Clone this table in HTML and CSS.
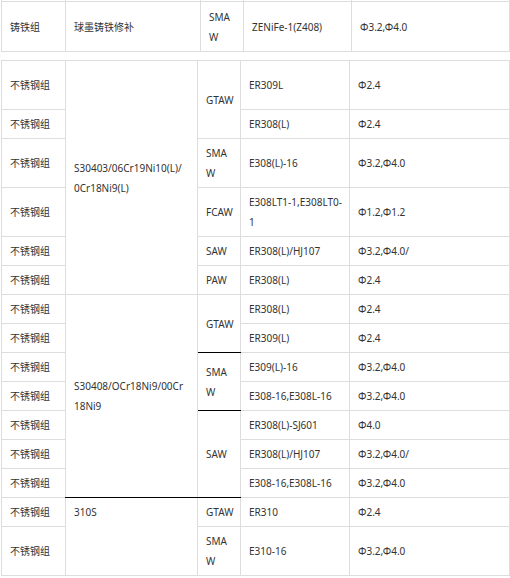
FILE: index.html
```html
<!DOCTYPE html>
<html lang="zh-CN">
<head>
<meta charset="utf-8">
<link rel="stylesheet" href="styles.css">
</head>
<body>
<div class="page">
<table class="tbl t1">
<colgroup><col class="a1"><col class="a2"><col class="a3"><col class="a4"><col class="a5"></colgroup>
<tr class="stub"><td></td><td></td><td></td><td></td><td></td></tr>
<tr><td>铸铁组</td><td>球墨铸铁修补</td><td>SMA<br>W</td><td>ZENiFe-1(Z408)</td><td>Φ3.2,Φ4.0</td></tr>
</table>

<table class="tbl t2">
<colgroup><col class="b1"><col class="b2"><col class="b3"><col class="b4"><col class="b5"></colgroup>
<tr class="tall"><td>不锈钢组</td><td rowspan="6">S30403/06Cr19Ni10(L)/<br>0Cr18Ni9(L)</td><td rowspan="2">GTAW</td><td>ER309L</td><td>Φ2.4</td></tr>
<tr><td>不锈钢组</td><td>ER308(L)</td><td>Φ2.4</td></tr>
<tr><td>不锈钢组</td><td>SMA<br>W</td><td>E308(L)-16</td><td>Φ3.2,Φ4.0</td></tr>
<tr><td>不锈钢组</td><td>FCAW</td><td>E308LT1-1,E308LT0-<br>1</td><td>Φ1.2,Φ1.2</td></tr>
<tr><td>不锈钢组</td><td>SAW</td><td>ER308(L)/HJ107</td><td>Φ3.2,Φ4.0/</td></tr>
<tr><td>不锈钢组</td><td>PAW</td><td>ER308(L)</td><td>Φ2.4</td></tr>
<tr><td>不锈钢组</td><td rowspan="7" class="bb">S30408/OCr18Ni9/00Cr<br>18Ni9</td><td rowspan="2" class="bb">GTAW</td><td>ER308(L)</td><td>Φ2.4</td></tr>
<tr><td>不锈钢组</td><td>ER309(L)</td><td>Φ2.4</td></tr>
<tr><td>不锈钢组</td><td rowspan="2" class="bt bb">SMA<br>W</td><td>E309(L)-16</td><td>Φ3.2,Φ4.0</td></tr>
<tr><td>不锈钢组</td><td>E308-16,E308L-16</td><td>Φ3.2,Φ4.0</td></tr>
<tr><td>不锈钢组</td><td rowspan="3" class="bt bb">SAW</td><td>ER308(L)-SJ601</td><td>Φ4.0</td></tr>
<tr><td>不锈钢组</td><td>ER308(L)/HJ107</td><td>Φ3.2,Φ4.0/</td></tr>
<tr><td>不锈钢组</td><td>E308-16,E308L-16</td><td>Φ3.2,Φ4.0</td></tr>
<tr><td>不锈钢组</td><td rowspan="2" class="bt top">310S</td><td class="bt">GTAW</td><td>ER310</td><td>Φ2.4</td></tr>
<tr><td>不锈钢组</td><td>SMA<br>W</td><td>E310-16</td><td>Φ3.2,Φ4.0</td></tr>
</table>
</div>
</body>
</html>
```
FILE: styles.css
```css
html, body {
  margin: 0;
  padding: 0;
  background: #ffffff;
}
.page {
  padding: 0 1px 0 1px;
  width: 508px;
}
.tbl {
  border-collapse: collapse;
  table-layout: fixed;
  width: 508px;
  font-family: "Noto Sans", "Noto Sans CJK SC", sans-serif;
  font-size: 10px;
  line-height: 20px;
  color: #333333;
}
.tbl td {
  border: 1px solid #dddddd;
  padding: 4px 8px;
  vertical-align: middle;
  text-align: left;
  white-space: nowrap;
  overflow: hidden;
}
.t1 .stub td {
  border-top: none;
  padding: 0;
  height: 1px;
  line-height: 1px;
}
.t1 td { padding-top: 5px; padding-bottom: 4px; }
.t2 { margin-top: 8px; }
.a1 { width: 64px; }
.a2 { width: 135px; }
.a3 { width: 43px; }
.a4 { width: 108px; }
.a5 { width: 158px; }
.b1 { width: 64px; }
.b2 { width: 132px; }
.b3 { width: 43px; }
.b4 { width: 109px; }
.b5 { width: 160px; }
.tall td { height: 40px; }
.tbl td.bt { border-top-color: #000000; }
.tbl td.bb { border-bottom-color: #000000; }
.tbl td.top { vertical-align: top; }
```
